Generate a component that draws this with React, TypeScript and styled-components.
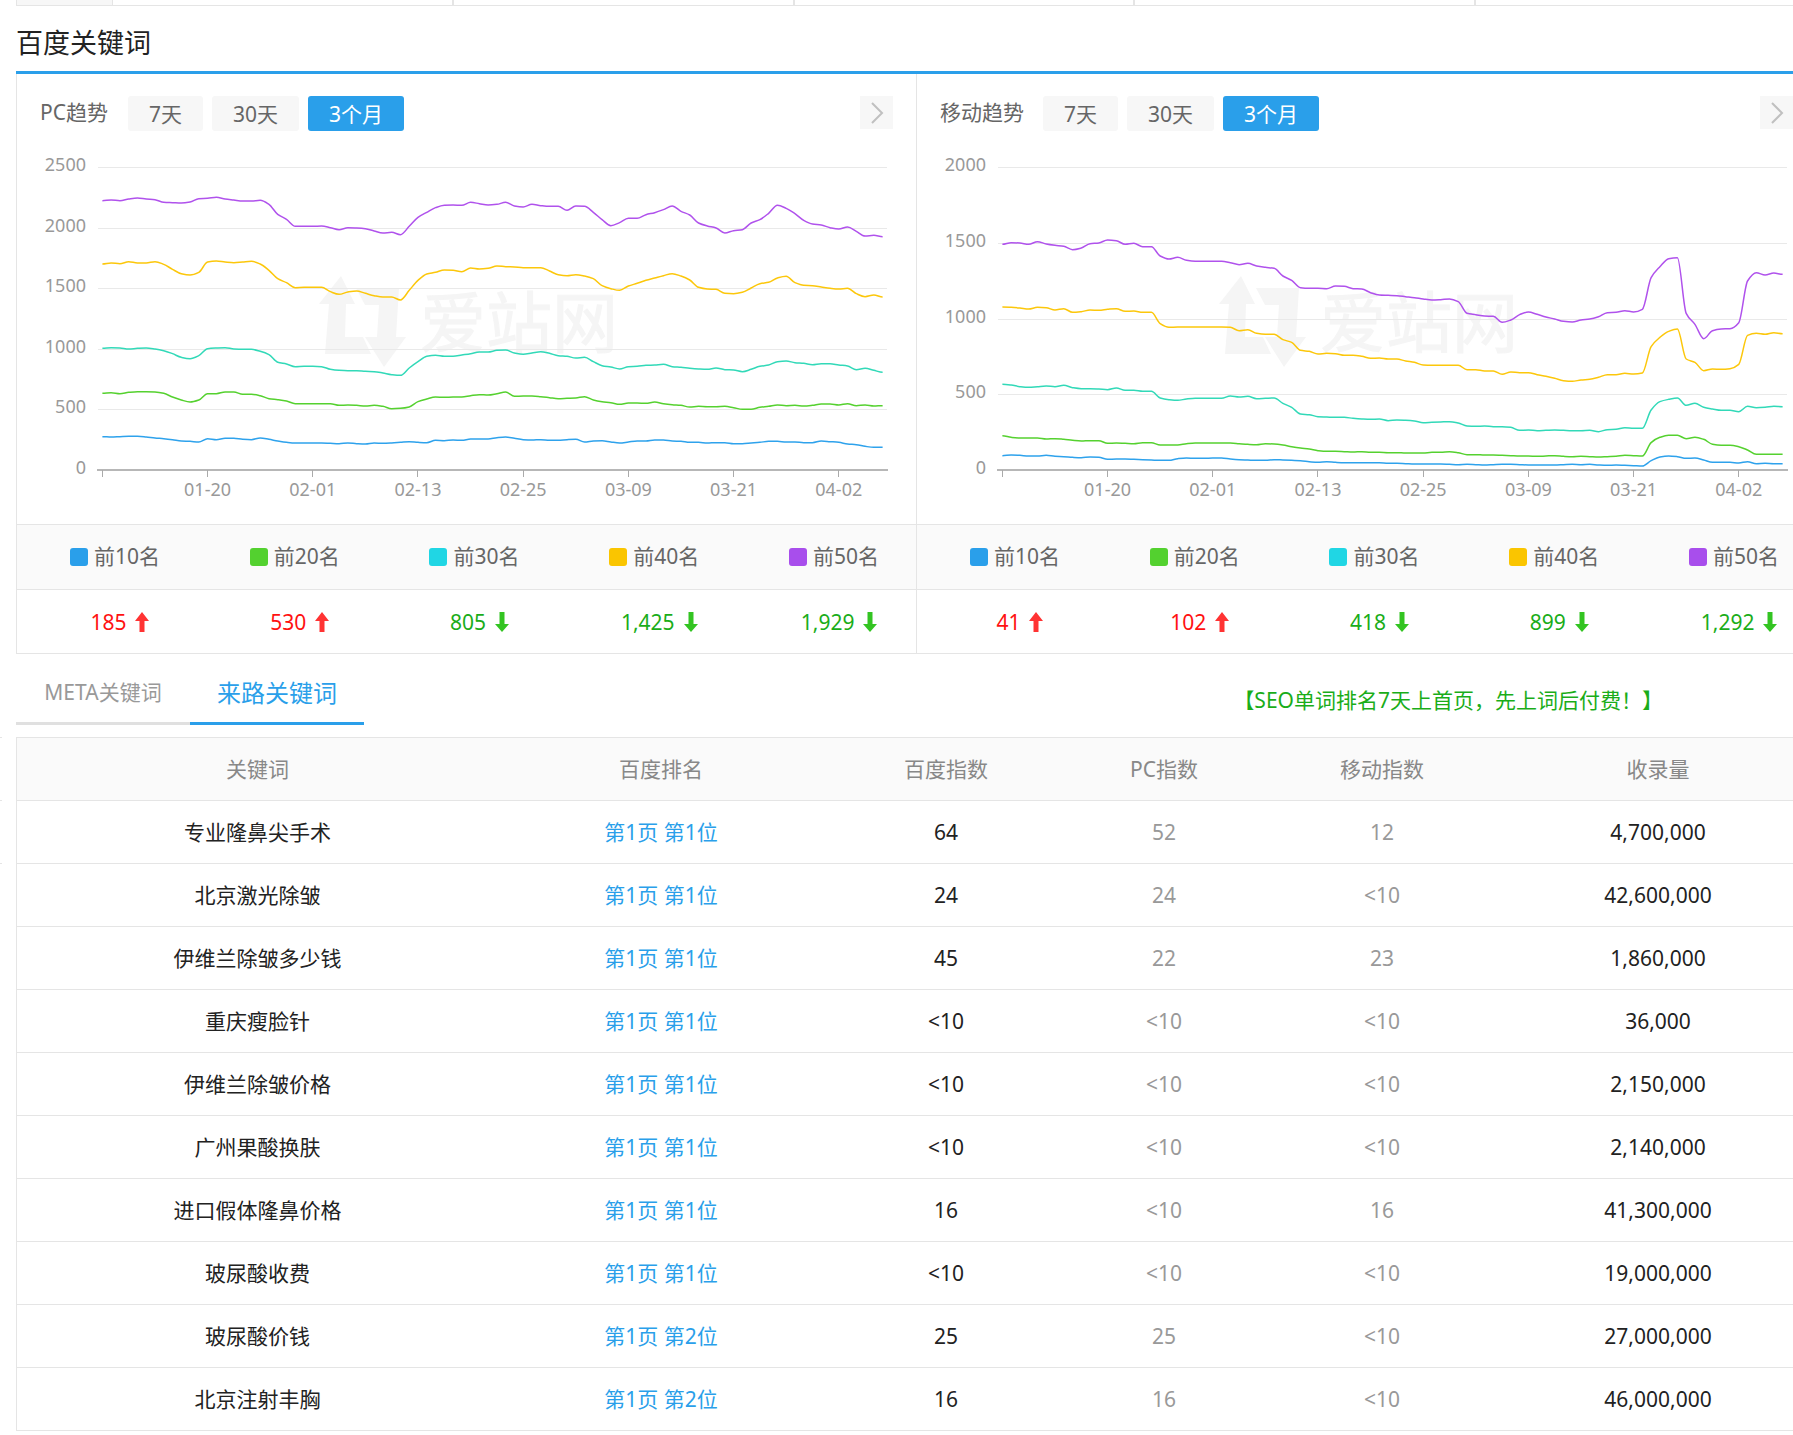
import React, { useState } from 'react';
import styled, { createGlobalStyle } from 'styled-components';

const LINE = '#e5e5e5';
const BLUE = '#2a9fea';
const FONT = "'Noto Sans', 'Noto Sans CJK SC', sans-serif";

const GlobalStyle = createGlobalStyle`
  * { box-sizing: border-box; }
  html, body { margin: 0; background: #fff; overflow-x: hidden; }
  body { font-family: ${FONT}; font-size: 21px; color: #222; }
  button { font: inherit; border: 0; padding: 0; cursor: pointer; }
  a { color: inherit; text-decoration: none; }
`;

const Page = styled.main`
  overflow: hidden;
`;

const Content = styled.div`
  margin: 0 -23px 0 16px;
`;

const Strip = styled.div`
  display: flex;
  height: 6px;
  border: 1px solid ${LINE};
  border-top: 0;
`;

const StripLabel = styled.div`
  width: 95px;
  background: #f7f7f7;
`;

const StripCell = styled.div`
  flex: 1;
  border-left: 1px solid ${LINE};
  & + & { border-left-width: 2px; }
`;

const Title = styled.h2`
  margin: 0;
  padding-top: 8px;
  height: 68px;
  border-bottom: 3px solid ${BLUE};
  font-size: 27px;
  font-weight: 400;
  line-height: 57px;
`;

const Panels = styled.div`
  display: grid;
  grid-template-columns: 1fr 1fr;
  border-bottom: 1px solid ${LINE};
`;

const Panel = styled.section`
  border-left: 1px solid ${LINE};
`;

const PanelHead = styled.header`
  display: flex;
  align-items: flex-start;
  gap: 9px;
  padding: 22px 23px 0;
  color: #666;
`;

const PanelName = styled.h3`
  min-width: 69px;
  margin: 0 10px 0 0;
  font-size: 21px;
  font-weight: 400;
  line-height: 32px;
`;

const RangeButton = styled.button<{ $on: boolean }>`
  height: 35px;
  padding: 2px 21px 0;
  border-radius: 3px;
  line-height: 33px;
  color: ${(p) => (p.$on ? '#fff' : '#666')};
  background: ${(p) => (p.$on ? BLUE : '#f7f7f7')};
`;

const NextButton = styled.button`
  display: grid;
  place-items: center;
  width: 33px;
  height: 33px;
  margin-left: auto;
  background: #f7f7f7;
`;

const ChartSvg = styled.svg`
  display: block;
  width: 100%;
  height: auto;
  font-family: ${FONT};
`;

const Cells = styled.div<{ $shade?: boolean }>`
  display: grid;
  grid-template-columns: repeat(5, 1fr);
  height: ${(p) => (p.$shade ? 65 : 64)}px;
  border-top: 1px solid ${LINE};
  background: ${(p) => (p.$shade ? '#fafafa' : '#fff')};
`;

const LegendCell = styled.div`
  display: flex;
  align-items: center;
  justify-content: center;
  gap: 6px;
  padding-left: 16px;
  color: #666;
`;

const LegendText = styled.span`
  padding-bottom: 4px;
`;

const Swatch = styled.span<{ $color: string }>`
  width: 18px;
  height: 18px;
  border-radius: 3px;
  background: ${(p) => p.$color};
`;

const ValueCell = styled.div<{ $up: boolean }>`
  display: flex;
  align-items: center;
  justify-content: center;
  gap: 9px;
  padding-left: 26px;
  color: ${(p) => (p.$up ? '#ff1111' : '#1aad19')};
`;

const TabRow = styled.div`
  display: flex;
  align-items: flex-start;
  height: 83px;
`;

const Tab = styled.button<{ $on: boolean }>`
  width: 174px;
  height: 71px;
  padding-top: 6px;
  background: none;
  border-bottom: 3px solid ${(p) => (p.$on ? BLUE : '#e0e0e0')};
  color: ${(p) => (p.$on ? BLUE : '#999')};
  font-size: ${(p) => (p.$on ? 24 : 21)}px;
`;

const Promo = styled.a`
  margin: 0 153px 0 auto;
  line-height: 92px;
  color: #1aad19;
`;

const TableArea = styled.div`
  display: flex;
  gap: 14px;
  margin-left: -16px;
`;

const Edge = styled.div`
  width: 2px;
  height: 127px;
  border-top: 1px solid ${LINE};
  border-bottom: 1px solid ${LINE};
  display: grid;
  align-items: center;
  &::before { content: ''; border-top: 1px solid ${LINE}; }
`;

const Table = styled.table`
  flex: 1;
  table-layout: fixed;
  border-collapse: separate;
  border-spacing: 0;
  border-top: 1px solid ${LINE};
  border-left: 1px solid ${LINE};
  text-align: center;
`;

const Col = styled.col<{ $w: number }>`
  width: ${(p) => p.$w}px;
`;

const Th = styled.th`
  height: 63px;
  padding: 0 0 2px;
  border-bottom: 1px solid ${LINE};
  background: #fafafa;
  color: #888;
  font-weight: 400;
  &:last-child { padding-right: 4px; }
`;

const Td = styled.td<{ $soft: boolean; $words: boolean }>`
  height: 63px;
  padding: 0 0 ${(p) => (p.$words ? 2 : 0)}px;
  border-bottom: 1px solid ${LINE};
  color: ${(p) => (p.$soft ? '#999' : '#222')};
  &:last-child { padding-right: 4px; }
`;

const RankLink = styled.a`
  color: ${BLUE};
`;

/* Depth of every daily point in a plot 910 units tall: 50 is the top line, 960 the axis. */
const nums = (s: string) => s.trim().split(/\s+/).map(Number);

const PC = [
  nums(`860 861 860 859 859 861 864 866 869 873 874 876 866 869 865 865 868 869 864 868
    873 877 879 879 879 879 880 881 879 881 882 879 880 879 877 875 877 878 871 872
    870 871 867 867 867 863 861 865 869 870 869 871 871 869 868 876 873 872 876 879
    876 873 873 870 870 873 874 877 877 879 878 878 881 881 879 877 874 874 876 876
    878 878 873 875 877 882 884 889 892 892`),
  nums(`730 728 731 727 725 725 726 730 741 750 756 750 731 731 726 726 733 733 737 746
    749 753 761 761 761 761 761 766 765 766 768 766 769 776 775 771 755 747 741 742
    741 741 737 734 735 731 726 739 738 738 740 743 746 745 744 740 750 755 758 763
    759 759 760 756 761 764 766 771 769 770 770 769 773 778 778 772 769 765 767 766
    768 766 762 762 765 761 767 765 768 767`),
  nums(`595 593 594 597 595 594 597 602 611 622 626 617 596 594 593 597 598 598 604 614
    637 642 650 649 649 650 658 661 662 662 664 665 669 674 676 654 635 619 616 619
    619 615 611 606 606 601 600 609 613 609 605 610 617 619 624 622 635 647 651 657
    650 649 646 645 643 650 652 655 657 658 654 659 660 665 658 649 645 635 633 638
    640 644 641 641 645 648 659 655 661 667`),
  nums(`342 339 341 335 339 339 335 343 358 371 375 367 336 333 336 338 336 334 342 361
    386 398 413 412 412 412 425 433 426 423 430 437 441 441 450 421 391 372 367 360
    361 365 354 357 355 348 350 351 353 353 353 363 374 377 374 378 386 407 416 421
    408 400 391 384 377 371 378 390 412 417 418 430 431 427 414 401 397 384 379 398
    406 407 411 415 417 415 431 440 435 441`),
  nums(`152 150 152 147 144 147 149 157 158 159 156 146 145 142 147 150 153 153 151 163
    193 208 229 229 229 228 233 239 233 234 236 243 249 247 254 229 202 187 173 166
    165 166 157 161 165 163 157 168 171 163 167 169 169 181 168 169 187 209 227 218
    205 205 194 188 179 168 184 195 219 228 234 249 242 239 219 209 190 166 175 191
    211 222 225 233 237 231 244 258 256 260`),
];

const MOBILE = [
  nums(`917 915 916 918 918 916 919 920 922 923 921 922 928 927 927 928 929 930 931 931
    926 924 925 925 924 924 927 929 930 931 931 929 930 931 932 935 937 935 937 938
    938 938 938 938 940 940 941 942 942 942 942 943 944 943 944 945 944 943 943 944
    945 945 945 945 944 943 944 943 945 946 945 946 947 948 932 921 918 920 925 924
    930 937 937 937 939 935 941 940 941 941`),
  nums(`857 862 864 864 864 867 866 868 871 873 872 872 880 879 880 881 878 878 885 885
    885 881 879 879 879 879 879 881 883 884 881 882 885 890 894 897 902 904 904 905
    906 905 907 907 908 908 909 909 909 907 907 905 908 914 914 915 915 916 917 918
    918 919 918 917 919 920 919 920 921 920 919 916 917 918 878 862 856 856 866 862
    868 883 886 886 890 900 913 913 913 913`),
  nums(`703 705 710 712 710 708 710 706 713 716 716 717 719 714 721 721 724 724 744 749
    751 747 745 745 745 745 738 741 739 746 745 744 760 772 792 794 800 801 802 802
    805 807 808 807 812 810 811 813 818 817 816 815 819 828 829 828 830 830 832 841
    840 842 841 840 841 842 842 841 845 839 838 833 835 835 780 755 748 744 766 760
    772 777 781 781 785 769 773 772 769 770`),
  nums(`471 472 474 477 472 473 480 476 487 485 480 481 478 476 484 483 487 487 521 532
    531 531 531 531 531 531 532 542 539 550 553 553 569 577 601 604 612 610 611 616
    616 619 625 624 627 627 633 637 645 646 646 646 646 659 659 663 663 673 666 668
    668 674 679 685 692 694 690 688 682 674 674 670 672 669 590 562 544 537 627 637
    662 657 658 656 643 556 550 553 548 551`),
  nums(`283 278 279 283 275 282 286 289 299 294 281 279 270 272 283 280 290 290 318 327
    322 331 334 334 334 334 338 344 340 348 352 355 378 391 413 415 415 416 408 409
    416 417 428 435 436 437 440 443 447 450 449 447 455 490 494 498 499 517 510 494
    486 493 501 507 514 516 510 507 500 488 487 482 486 478 383 350 326 323 490 523
    566 542 537 536 518 393 368 375 369 373`),
];

const STROKES = ['#2ea2ec', '#55d12f', '#32d9b8', '#fcc70b', '#b052ec'];
const SWATCHES = ['#2a9fea', '#53d12f', '#20d6e4', '#fac500', '#a84eec'];
const DATES = ['', '01-20', '02-01', '02-13', '02-25', '03-09', '03-21', '04-02'];

const LEFT = 81;
const STEP = 789 / 90;
const AXIS = 339;
const xAt = (i: number) => LEFT + STEP * (i + 0.5);
const yAt = (t: number) => t / 3 + 19;

/* Monotone cubic curve through evenly spaced points. */
function smooth(points: number[]) {
  const y = points.map(yAt);
  const d = y.slice(1).map((v, i) => v - y[i]);
  const m = y.map((_, i) => {
    if (i === 0 || i === y.length - 1) return 0;
    const a = d[i - 1];
    const b = d[i];
    return a * b <= 0 ? 0 : (2 * a * b) / (a + b);
  });
  let path = `M${xAt(0)} ${y[0]}`;
  for (let i = 1; i < y.length; i++) {
    const c = STEP / 3;
    path += `C${xAt(i - 1) + c} ${y[i - 1] + m[i - 1] / 3} ${xAt(i) - c} ${y[i] - m[i] / 3} ${xAt(i)} ${y[i]}`;
  }
  return path;
}

function Chart({ label, series, ticks }: { label: string; series: number[][]; ticks: number[] }) {
  const lineY = (i: number) => Math.round(AXIS - (303 * (ticks.length - 1 - i)) / (ticks.length - 1));
  return (
    <ChartSvg viewBox="0 0 899 393" role="img" aria-label={label}>
      <g fill="#f5f5f5">
        <path d="M324 145 302 173H312L308 223H354L346 206H328L329 173H338Z" />
        <path d="M339 157H382L379 206H389L367 236L348 206H360L362 174H348Z" />
        <text x="403" y="216" fontSize="66" stroke="#f5f5f5" strokeWidth="1">爱站网</text>
      </g>
      {ticks.map((t, i) => (
        <g key={t}>
          {t > 0 && <rect x={LEFT} y={lineY(i)} width="789" height="1" fill="#e9e9e9" />}
          <text x="69" y={lineY(i) + 4} fontSize="18" fill="#999" textAnchor="end">{t}</text>
        </g>
      ))}
      {series.map((s, i) => (
        <path key={i} d={smooth(s)} fill="none" stroke={STROKES[i]} strokeWidth="1.5" strokeLinejoin="round" />
      ))}
      <g fill="#aaa">
        <rect x={LEFT - 1} y={AXIS - 1} width="791" height="2" opacity=".85" />
        {DATES.map((date, i) => (
          <rect key={date} x={Math.floor(xAt(i * 12))} y={AXIS} width="1" height="7" />
        ))}
      </g>
      {DATES.map((date, i) => (
        <text key={date} x={xAt(i * 12)} y="365" fontSize="18" fill="#999" textAnchor="middle">{date}</text>
      ))}
    </ChartSvg>
  );
}

function Arrow({ up }: { up: boolean }) {
  return (
    <svg width="14" height="20" viewBox="0 0 14 20" aria-hidden="true">
      <path
        d={up ? 'M7 0 14 9H9.5V20H4.5V9H0Z' : 'M7 20 0 12H4.5V0H9.5V12H14Z'}
        fill={up ? '#ff3333' : '#33c422'}
      />
    </svg>
  );
}

type PanelProps = { name: string; series: number[][]; ticks: number[]; values: string[] };

function TrendPanel({ name, series, ticks, values }: PanelProps) {
  const [range, setRange] = useState('3个月');
  return (
    <Panel>
      <PanelHead>
        <PanelName>{name}</PanelName>
        {['7天', '30天', '3个月'].map((r) => (
          <RangeButton key={r} type="button" $on={r === range} aria-pressed={r === range} onClick={() => setRange(r)}>
            {r}
          </RangeButton>
        ))}
        <NextButton type="button" aria-label="更多">
          <svg width="33" height="33" viewBox="0 0 33 33" fill="none" stroke="#c0c0c0" strokeWidth="2">
            <path d="M12 7 22 17 12 27" />
          </svg>
        </NextButton>
      </PanelHead>
      <Chart label={name} series={series} ticks={ticks} />
      <Cells $shade>
        {SWATCHES.map((color, i) => (
          <LegendCell key={color}>
            <Swatch $color={color} />
            <LegendText>前{(i + 1) * 10}名</LegendText>
          </LegendCell>
        ))}
      </Cells>
      <Cells>
        {values.map((v, i) => (
          <ValueCell key={v} $up={i < 2}>
            <span>{v}</span>
            <Arrow up={i < 2} />
          </ValueCell>
        ))}
      </Cells>
    </Panel>
  );
}

const ROWS = [
  ['专业隆鼻尖手术', '第1页 第1位', '64', '52', '12', '4,700,000'],
  ['北京激光除皱', '第1页 第1位', '24', '24', '<10', '42,600,000'],
  ['伊维兰除皱多少钱', '第1页 第1位', '45', '22', '23', '1,860,000'],
  ['重庆瘦脸针', '第1页 第1位', '<10', '<10', '<10', '36,000'],
  ['伊维兰除皱价格', '第1页 第1位', '<10', '<10', '<10', '2,150,000'],
  ['广州果酸换肤', '第1页 第1位', '<10', '<10', '<10', '2,140,000'],
  ['进口假体隆鼻价格', '第1页 第1位', '16', '<10', '16', '41,300,000'],
  ['玻尿酸收费', '第1页 第1位', '<10', '<10', '<10', '19,000,000'],
  ['玻尿酸价钱', '第1页 第2位', '25', '25', '<10', '27,000,000'],
  ['北京注射丰胸', '第1页 第2位', '16', '16', '<10', '46,000,000'],
];

const TABS = ['META关键词', '来路关键词'];

export default function App() {
  const [tab, setTab] = useState(TABS[1]);
  return (
    <Page lang="zh-CN">
      <GlobalStyle />
      <Content>
        <Strip>
          <StripLabel />
          {[0, 1, 2, 3, 4].map((i) => <StripCell key={i} />)}
        </Strip>
        <Title>百度关键词</Title>
        <Panels>
          <TrendPanel
            name="PC趋势"
            series={PC}
            ticks={[2500, 2000, 1500, 1000, 500, 0]}
            values={['185', '530', '805', '1,425', '1,929']}
          />
          <TrendPanel
            name="移动趋势"
            series={MOBILE}
            ticks={[2000, 1500, 1000, 500, 0]}
            values={['41', '102', '418', '899', '1,292']}
          />
        </Panels>
        <TabRow>
          {TABS.map((t) => (
            <Tab key={t} type="button" $on={t === tab} aria-pressed={t === tab} onClick={() => setTab(t)}>{t}</Tab>
          ))}
          <Promo href="#seo">【SEO单词排名7天上首页，先上词后付费！】</Promo>
        </TabRow>
        <TableArea>
          <Edge />
          <Table>
            <colgroup>
              {[481, 326, 244, 192, 244, 312].map((w, i) => <Col key={i} $w={w} />)}
            </colgroup>
            <thead>
              <tr>
                {['关键词', '百度排名', '百度指数', 'PC指数', '移动指数', '收录量'].map((h) => <Th key={h} scope="col">{h}</Th>)}
              </tr>
            </thead>
            <tbody>
              {ROWS.map((row) => (
                <tr key={row[0]}>
                  {row.map((cell, i) => (
                    <Td key={i} $words={i < 2} $soft={i === 3 || i === 4}>
                      {i === 1 ? <RankLink href="#rank">{cell}</RankLink> : cell}
                    </Td>
                  ))}
                </tr>
              ))}
            </tbody>
          </Table>
        </TableArea>
      </Content>
    </Page>
  );
}
